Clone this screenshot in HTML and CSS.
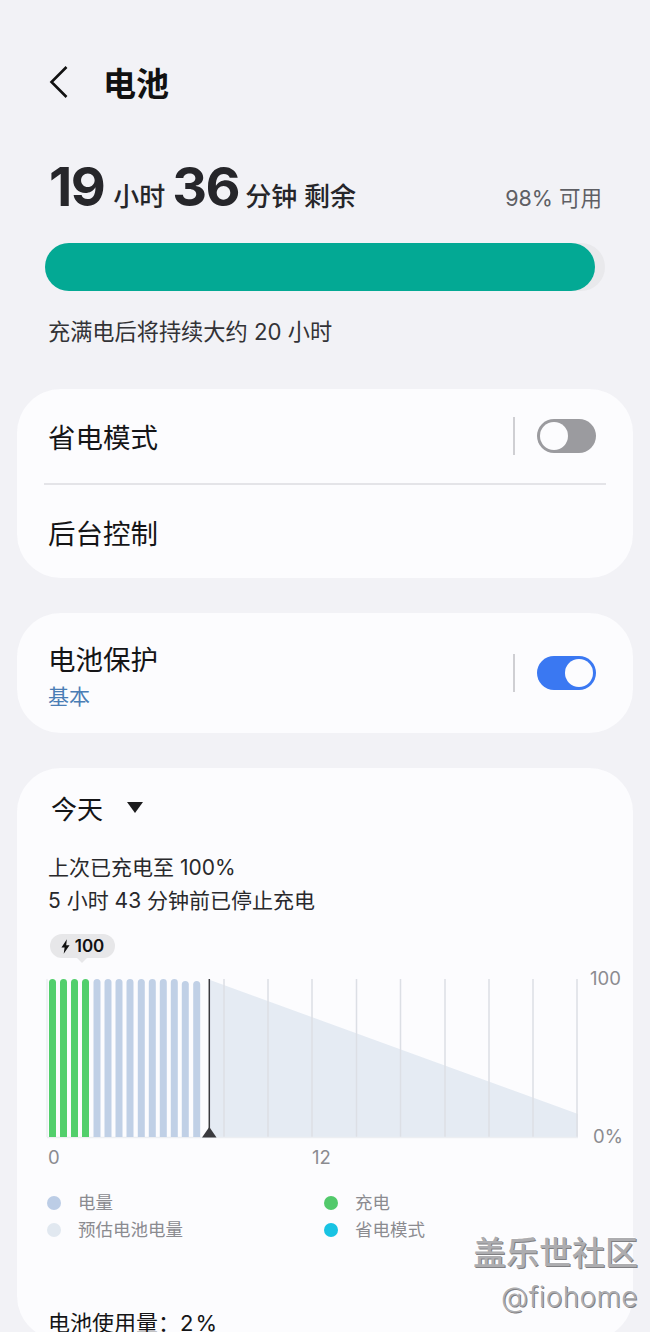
FILE: index.html
```html
<!DOCTYPE html>
<html lang="zh-CN">
<head>
  <meta charset="UTF-8"/>
  <meta name="viewport" content="width=device-width, initial-scale=1.0"/>
  <title>电池</title>
  <link rel="stylesheet" href="styles.css">
</head>
<body>
<div class="page">
  <header class="topbar">
    <svg class="back" width="20" height="34" viewBox="0 0 20 34"><path d="M17.5 2 L2.5 17 L17.5 32"/></svg>
    <h1>电池</h1>
  </header>

  <section class="summary">
    <div class="remain">
      <div><b class="num-h">19</b> <span>小时</span> <b class="num-m">36</b> <span>分钟 剩余</span></div>
      <div class="avail">98% 可用</div>
    </div>
    <div class="bar-track"><div class="bar-fill"></div></div>
    <p class="full-note">充满电后将持续大约 20 小时</p>
  </section>

  <section class="card card-saver">
    <div class="row row-first">
      <div class="row-label">省电模式</div>
      <div class="sep"></div>
      <div class="toggle"></div>
    </div>
    <div class="divider"></div>
    <div class="row row-second">
      <div class="row-label">后台控制</div>
    </div>
  </section>

  <section class="card">
    <div class="row row-protect">
      <div class="protect-text">
        <div class="row-label">电池保护</div>
        <div class="row-sub">基本</div>
      </div>
      <div class="sep"></div>
      <div class="toggle on"></div>
    </div>
  </section>

  <section class="card card-usage">
    <div class="range">今天 <i class="caret"></i></div>
    <div class="last-charge">
      <div>上次已充电至 100%</div>
      <div>5 小时 43 分钟前已停止充电</div>
    </div>
    <div class="pill">
      <svg width="10" height="16" viewBox="0 0 10 16"><path d="M6.5 0 L0.5 9 H4 L3 16 L9.5 6.5 H5.8 Z"/></svg>
      100
    </div>
    <svg class="chart" width="616" height="210" viewBox="17 960 616 210">
      <polygon class="area" points="210,980 578,1114 578,1137 210,1137"/>
      <g class="grid">
        <line x1="224" y1="979" x2="224" y2="1137"/>
        <line x1="268" y1="979" x2="268" y2="1137"/>
        <line x1="312" y1="979" x2="312" y2="1137"/>
        <line x1="356.5" y1="979" x2="356.5" y2="1137"/>
        <line x1="400.5" y1="979" x2="400.5" y2="1137"/>
        <line x1="445" y1="979" x2="445" y2="1137"/>
        <line x1="489" y1="979" x2="489" y2="1137"/>
        <line x1="533" y1="979" x2="533" y2="1137"/>
        <line x1="577" y1="979" x2="577" y2="1137"/>
      </g>
      <g class="grid-faint">
        <line x1="47" y1="979" x2="47" y2="1137"/>
        <line x1="47" y1="1137.5" x2="578" y2="1137.5"/>
      </g>
      <g class="bars-charge">
        <path d="M49 1137 V982.500 a3.500 3.500 0 0 1 7 0 V1137 Z"/>
        <path d="M60 1137 V982.500 a3.500 3.500 0 0 1 7 0 V1137 Z"/>
        <path d="M71 1137 V982.500 a3.500 3.500 0 0 1 7 0 V1137 Z"/>
        <path d="M82 1137 V982.500 a3.500 3.500 0 0 1 7 0 V1137 Z"/>
      </g>
      <g class="bars-level">
        <path d="M93.500 1137 V982.500 a3.500 3.500 0 0 1 7 0 V1137 Z"/>
        <path d="M104.500 1137 V982.500 a3.500 3.500 0 0 1 7 0 V1137 Z"/>
        <path d="M115.500 1137 V982.500 a3.500 3.500 0 0 1 7 0 V1137 Z"/>
        <path d="M126.500 1137 V982.500 a3.500 3.500 0 0 1 7 0 V1137 Z"/>
        <path d="M137.800 1137 V982.500 a3.500 3.500 0 0 1 7 0 V1137 Z"/>
        <path d="M148.800 1137 V982.500 a3.500 3.500 0 0 1 7 0 V1137 Z"/>
        <path d="M159.800 1137 V982.500 a3.500 3.500 0 0 1 7 0 V1137 Z"/>
        <path d="M170.800 1137 V982.500 a3.500 3.500 0 0 1 7 0 V1137 Z"/>
        <path d="M181.800 1137 V984.500 a3.500 3.500 0 0 1 7 0 V1137 Z"/>
        <path d="M193.200 1137 V984.500 a3.500 3.500 0 0 1 7 0 V1137 Z"/>
      </g>
      <line class="now" x1="209.300" y1="979" x2="209.300" y2="1130"/>
      <polygon class="now-tip" points="209.300,1127 216.500,1137.500 202,1137.500"/>
      <text x="590" y="985">100</text>
      <text x="593" y="1143">0%</text>
      <text x="48" y="1164">0</text>
      <text x="312" y="1164">12</text>
    </svg>
    <div class="legend">
      <div class="legend-item"><i class="dot dot-level"></i>电量</div>
      <div class="legend-item"><i class="dot dot-charge"></i>充电</div>
      <div class="legend-item"><i class="dot dot-est"></i>预估电池电量</div>
      <div class="legend-item"><i class="dot dot-saver"></i>省电模式</div>
    </div>
    <div class="usage">电池使用量：<span class="usage-val">2%</span></div>
  </section>

  <div class="watermark">
    <div class="wm-cn">盖乐世社区</div>
    <div class="wm-id">@fiohome</div>
  </div>
</div>
</body>
</html>
```

FILE: styles.css
```css
body { margin: 0; background-color: #f2f2f6; color: #1c1c1e; font-family: Inter, "Noto Sans CJK SC", sans-serif; }
.page { position: relative; width: 650px; height: 1332px; overflow: hidden; }

.topbar { display: flex; align-items: center; height: 48px; padding: 60px 0 0 49px; }
.back { margin-top: -5px; fill: none; stroke: #111; stroke-width: 2.6; }
.topbar h1 { margin: 0 0 0 34px; font-size: 33px; line-height: 48px; font-weight: 700; color: #111; }

.summary { padding: 0 45px; }
.remain { display: flex; justify-content: space-between; align-items: baseline; margin-top: 44px; padding: 0 3px 0 4px; height: 70px; line-height: 70px; font-size: 26px; font-weight: 500; color: #26262a; }
.remain b { font-size: 54px; font-weight: 700; letter-spacing: -1.5px; }
.remain .num-h { margin-right: 2px; }
.remain .num-m { margin-right: -1px; }
.avail { font-size: 21.5px; font-weight: 400; color: #5f5f64; }
.bar-track { width: 560px; height: 48px; margin-top: 21px; background-color: #e9e9ec; border-radius: 24px; }
.bar-fill { width: 550px; height: 48px; background-color: #03a994; border-radius: 24px; }
.full-note { margin: 24px 0 0 3px; font-size: 22.2px; line-height: 34px; color: #333336; }

.card { margin: 35px 17px 0; background-color: #fcfcfe; border-radius: 44px; }
.card-saver { margin-top: 40px; }
.row { display: flex; align-items: center; padding: 0 37px 0 31px; }
.row-first { height: 94px; }
.row-first .row-label { padding-top: 4px; }
.row-second { height: 93px; }
.row-second .row-label { padding-top: 4px; }
.row-protect { height: 120px; }
.protect-text { padding-top: 6px; }
.row-label { font-size: 27.5px; line-height: 40px; color: #151517; }
.row-sub { margin-top: 2px; font-size: 21px; line-height: 30px; color: #4a7db5; }
.row-first .sep, .row-protect .sep { margin-left: auto; }
.divider { height: 2px; margin: 0 27px; background-color: #e4e4e8; }
.sep { width: 2px; height: 38px; background-color: #cfcfd3; }

.toggle { position: relative; width: 59px; height: 34px; margin-left: 22px; background-color: #9b9b9f; border-radius: 17px; }
.toggle::after { content: ""; position: absolute; top: 3px; left: 3px; width: 28px; height: 28px; background-color: #fcfcfe; border-radius: 50%; }
.toggle.on { background-color: #3a78f2; }
.toggle.on::after { left: 28px; }

.card-usage { height: 572px; padding: 24px 0 0; box-sizing: border-box; }
.range { display: flex; align-items: center; margin-left: 34px; font-size: 26px; line-height: 36px; color: #151517; }
.caret { width: 0; height: 0; margin: 0 0 6px 24px; border-left: 8px solid transparent; border-right: 8px solid transparent; border-top: 11px solid #1c1c1e; }
.last-charge { margin: 23px 0 0 31px; font-size: 21px; line-height: 33px; color: #29292c; }
.pill { position: relative; display: flex; align-items: center; justify-content: center; gap: 5px; width: 65px; height: 24px; margin: 17px 0 0 33px; background-color: #e7e7e9; border-radius: 12px; font-size: 17px; font-weight: 600; color: #111; }
.pill svg { fill: #111; width: 9px; height: 15px; }
.pill::after { content: ""; position: absolute; left: 27px; bottom: -5px; border-left: 5px solid transparent; border-right: 5px solid transparent; border-top: 5px solid #e7e7e9; }
.chart { display: block; margin-top: 2px; }
.chart .area { fill: #e5ebf3; }
.chart .grid line { stroke: #dcdfe5; stroke-width: 1.5; }
.chart .grid-faint line { stroke: #eceef2; stroke-width: 1.5; }
.chart .bars-charge { fill: #52cf6c; }
.chart .bars-level { fill: #c0d0e6; }
.chart .now { stroke: #3a3a3e; stroke-width: 1.5; }
.chart .now-tip { fill: #3a3a3e; }
.chart text { font-size: 18.5px; fill: #8b8b90; }

.legend { display: grid; grid-template-columns: 277px 1fr; margin: 19px 0 0 30px; font-size: 17.5px; line-height: 27px; color: #8b8b90; }
.legend-item { display: flex; align-items: center; }
.dot { width: 14px; height: 14px; margin-right: 17px; border-radius: 50%; }
.dot-level { background-color: #bccde6; }
.dot-charge { background-color: #52c96b; }
.dot-est { background-color: #e1e8f0; }
.dot-saver { background-color: #18c3e3; }
.usage { margin: 65px 0 0 31px; font-size: 22px; line-height: 30px; color: #151517; }
.usage-val { letter-spacing: 2px; }

.watermark { position: absolute; right: 12px; top: 1233px; text-align: right; color: #adadb0; text-shadow: 1px 1px 0 #808083, -1px -1px 0 #fff; }
.wm-cn { font-size: 33px; line-height: 40px; font-weight: 500; }
.wm-id { margin-top: 6px; font-size: 28px; line-height: 36px; font-weight: 300; letter-spacing: 0.4px; }
```
